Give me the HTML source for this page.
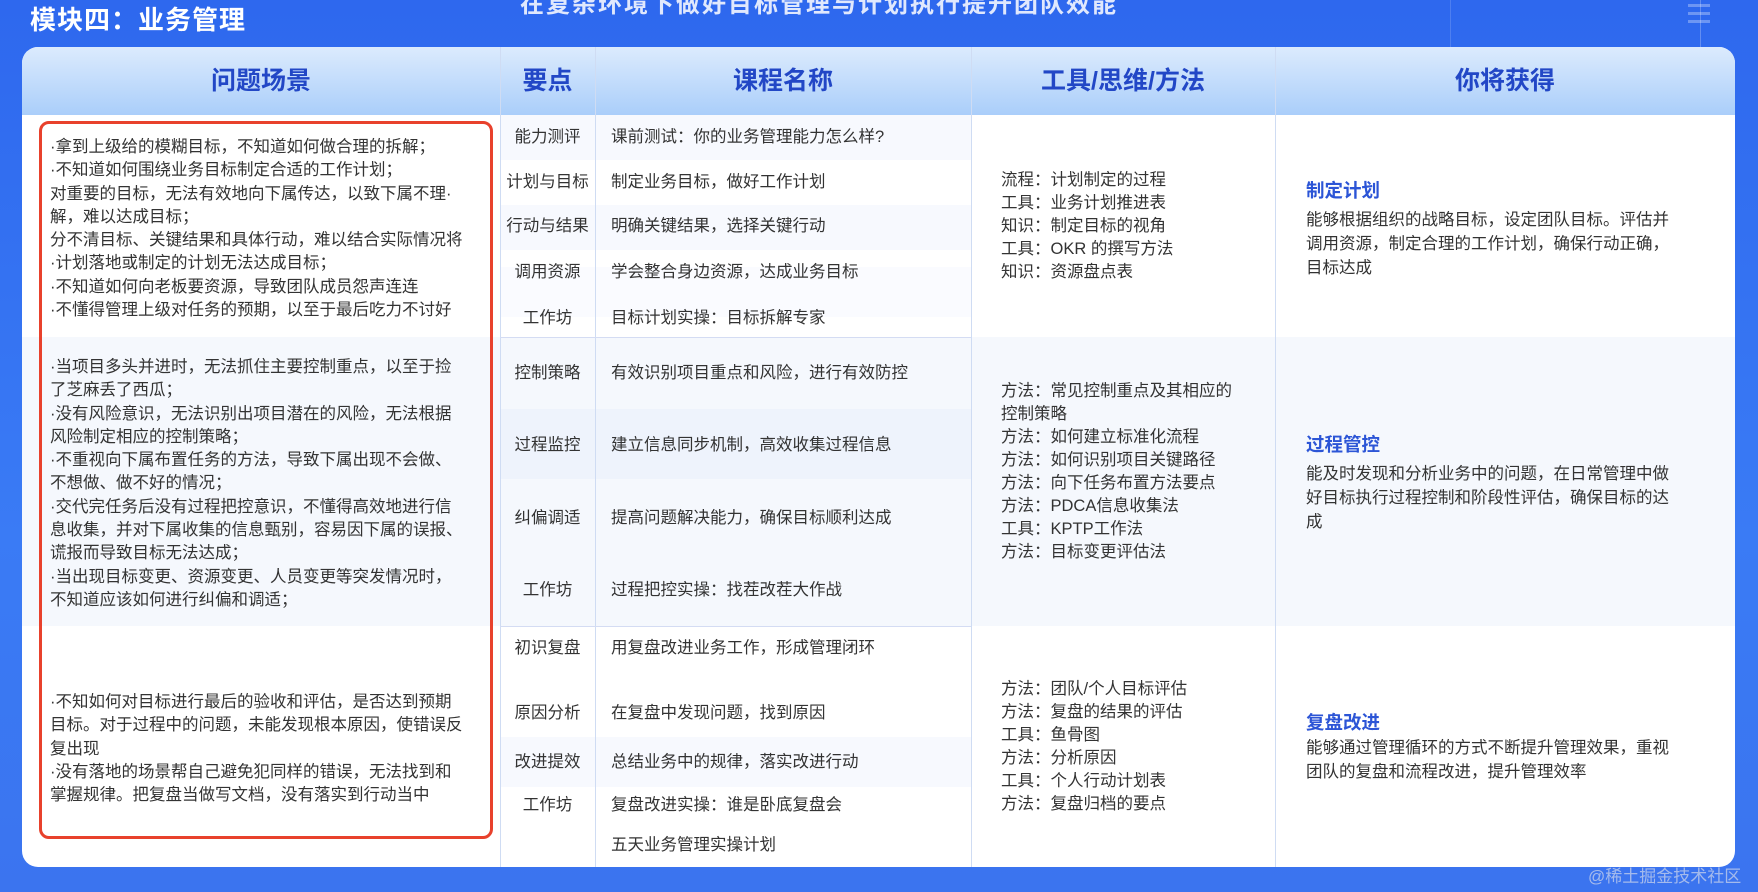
<!DOCTYPE html>
<html><head><meta charset="utf-8"><style>
*{margin:0;padding:0;box-sizing:border-box}
body{width:1758px;height:892px;overflow:hidden;position:relative;background:linear-gradient(180deg,#2e68ee 0%,#3a7bf5 60%,#3b74ef 100%);font-family:"Liberation Sans","Noto Sans CJK SC",sans-serif;color:#333}
.a{position:absolute}
.title{left:30px;top:0px;color:#fff;font-size:26px;font-weight:bold;letter-spacing:1px}
.tbl{left:22px;top:47px;width:1713px;height:820px;background:#fff;border-radius:16px;overflow:hidden}
.hdr{left:0;top:0;width:1713px;height:68px;background:linear-gradient(180deg,#dcebfd,#aacefa)}
.h{top:0;height:68px;line-height:68px;text-align:center;color:#2247c6;font-size:25px;font-weight:bold}
.vl{top:0;width:1px;height:820px;background:#cfdcf3}
.hl{height:1px;background:#d4dcf3}
.t{font-size:16.5px;line-height:22px;white-space:nowrap;color:#333}
.g{font-size:16.5px;line-height:24px;color:#333}
.gt{font-size:18.5px;color:#2c55d6;line-height:24px;font-weight:bold}
.red{left:39px;top:121px;width:454px;height:718px;border:3.5px solid #e8412c;border-radius:10px}
</style></head><body>
<div class="a" style="left:520px;top:-16px;color:rgba(255,255,255,.85);font-size:24px;font-weight:bold;letter-spacing:2px;white-space:nowrap">在复杂环境下做好目标管理与计划执行提升团队效能</div>
<div class="a" style="left:1450px;top:0;width:1px;height:47px;background:rgba(255,255,255,.15)"></div>
<div class="a" style="left:1700px;top:0;width:1px;height:47px;background:rgba(255,255,255,.25)"></div>
<div class="a" style="left:1688px;top:4px;width:22px;height:3px;background:rgba(255,255,255,.3);box-shadow:0 8px 0 rgba(255,255,255,.3),0 16px 0 rgba(255,255,255,.3)"></div>
<div class="a title">模块四：业务管理</div>
<div class="a tbl">
 <div class="a hdr"></div>
 <div class="a" style="left:0;top:290px;width:1713px;height:289px;background:#f5f8fd"></div>
 <div class="a" style="left:478px;top:68px;width:471px;height:45px;background:#f7f9fe"></div>
 <div class="a" style="left:478px;top:158px;width:471px;height:45px;background:#f7f9fe"></div>
 <div class="a" style="left:478px;top:362px;width:471px;height:70px;background:#eef3fc"></div>
 <div class="a" style="left:478px;top:220px;width:471px;height:50px;background:#fafbff"></div>
 <div class="a" style="left:478px;top:690px;width:471px;height:50px;background:#f7f9fe"></div>
 <div class="a h" style="left:0;width:478px">问题场景</div>
 <div class="a h" style="left:478px;width:95px">要点</div>
 <div class="a h" style="left:573px;width:376px">课程名称</div>
 <div class="a h" style="left:949px;width:304px">工具/思维/方法</div>
 <div class="a h" style="left:1253px;width:460px">你将获得</div>
 <div class="a vl" style="left:478px"></div>
 <div class="a vl" style="left:573px"></div>
 <div class="a vl" style="left:949px"></div>
 <div class="a vl" style="left:1253px"></div>
 <div class="a hl" style="left:478px;top:290px;width:471px"></div>
 <div class="a hl" style="left:478px;top:579px;width:471px"></div>
</div>
<div class="a red"></div>
<!-- left -->
<div class="a t" style="left:50px;top:136px;line-height:23.3px">·拿到上级给的模糊目标，不知道如何做合理的拆解；<br>·不知道如何围绕业务目标制定合适的工作计划；<br>对重要的目标，无法有效地向下属传达，以致下属不理·<br>解，难以达成目标；<br>分不清目标、关键结果和具体行动，难以结合实际情况将<br>·计划落地或制定的计划无法达成目标；<br>·不知道如何向老板要资源，导致团队成员怨声连连<br>·不懂得管理上级对任务的预期，以至于最后吃力不讨好</div>
<div class="a t" style="left:50px;top:356px;line-height:23.3px">·当项目多头并进时，无法抓住主要控制重点，以至于捡<br>了芝麻丢了西瓜；<br>·没有风险意识，无法识别出项目潜在的风险，无法根据<br>风险制定相应的控制策略；<br>·不重视向下属布置任务的方法，导致下属出现不会做、<br>不想做、做不好的情况；<br>·交代完任务后没有过程把控意识，不懂得高效地进行信<br>息收集，并对下属收集的信息甄别，容易因下属的误报、<br>谎报而导致目标无法达成；<br>·当出现目标变更、资源变更、人员变更等突发情况时，<br>不知道应该如何进行纠偏和调适；</div>
<div class="a t" style="left:50px;top:691px;line-height:23.3px">·不知如何对目标进行最后的验收和评估，是否达到预期<br>目标。对于过程中的问题，未能发现根本原因，使错误反<br>复出现<br>·没有落地的场景帮自己避免犯同样的错误，无法找到和<br>掌握规律。把复盘当做写文档，没有落实到行动当中</div>
<!-- 要点 / 课程 -->
<div class="a t" style="left:500px;width:95px;text-align:center;top:126px">能力测评</div>
<div class="a t" style="left:500px;width:95px;text-align:center;top:171px">计划与目标</div>
<div class="a t" style="left:500px;width:95px;text-align:center;top:215px">行动与结果</div>
<div class="a t" style="left:500px;width:95px;text-align:center;top:261px">调用资源</div>
<div class="a t" style="left:500px;width:95px;text-align:center;top:307px">工作坊</div>
<div class="a t" style="left:500px;width:95px;text-align:center;top:362px">控制策略</div>
<div class="a t" style="left:500px;width:95px;text-align:center;top:434px">过程监控</div>
<div class="a t" style="left:500px;width:95px;text-align:center;top:507px">纠偏调适</div>
<div class="a t" style="left:500px;width:95px;text-align:center;top:579px">工作坊</div>
<div class="a t" style="left:500px;width:95px;text-align:center;top:637px">初识复盘</div>
<div class="a t" style="left:500px;width:95px;text-align:center;top:702px">原因分析</div>
<div class="a t" style="left:500px;width:95px;text-align:center;top:751px">改进提效</div>
<div class="a t" style="left:500px;width:95px;text-align:center;top:794px">工作坊</div>
<div class="a t" style="left:611px;top:126px">课前测试：你的业务管理能力怎么样?</div>
<div class="a t" style="left:611px;top:171px">制定业务目标，做好工作计划</div>
<div class="a t" style="left:611px;top:215px">明确关键结果，选择关键行动</div>
<div class="a t" style="left:611px;top:261px">学会整合身边资源，达成业务目标</div>
<div class="a t" style="left:611px;top:307px">目标计划实操：目标拆解专家</div>
<div class="a t" style="left:611px;top:362px">有效识别项目重点和风险，进行有效防控</div>
<div class="a t" style="left:611px;top:434px">建立信息同步机制，高效收集过程信息</div>
<div class="a t" style="left:611px;top:507px">提高问题解决能力，确保目标顺利达成</div>
<div class="a t" style="left:611px;top:579px">过程把控实操：找茬改茬大作战</div>
<div class="a t" style="left:611px;top:637px">用复盘改进业务工作，形成管理闭环</div>
<div class="a t" style="left:611px;top:702px">在复盘中发现问题，找到原因</div>
<div class="a t" style="left:611px;top:751px">总结业务中的规律，落实改进行动</div>
<div class="a t" style="left:611px;top:794px">复盘改进实操：谁是卧底复盘会</div>
<div class="a t" style="left:611px;top:834px">五天业务管理实操计划</div>
<!-- tools -->
<div class="a t" style="left:1001px;top:169px;line-height:23px">流程：计划制定的过程<br>工具：业务计划推进表<br>知识：制定目标的视角<br>工具：OKR 的撰写方法<br>知识：资源盘点表</div>
<div class="a t" style="left:1001px;top:380px;line-height:23px">方法：常见控制重点及其相应的<br>控制策略<br>方法：如何建立标准化流程<br>方法：如何识别项目关键路径<br>方法：向下任务布置方法要点<br>方法：PDCA信息收集法<br>工具：KPTP工作法<br>方法：目标变更评估法</div>
<div class="a t" style="left:1001px;top:678px;line-height:23px">方法：团队/个人目标评估<br>方法：复盘的结果的评估<br>工具：鱼骨图<br>方法：分析原因<br>工具：个人行动计划表<br>方法：复盘归档的要点</div>
<!-- gains -->
<div class="a gt" style="left:1306px;top:179px">制定计划</div>
<div class="a g" style="left:1306px;top:208px;width:372px">能够根据组织的战略目标，设定团队目标。评估并调用资源，制定合理的工作计划，确保行动正确，目标达成</div>
<div class="a gt" style="left:1306px;top:433px">过程管控</div>
<div class="a g" style="left:1306px;top:462px;width:372px">能及时发现和分析业务中的问题，在日常管理中做好目标执行过程控制和阶段性评估，确保目标的达成</div>
<div class="a gt" style="left:1306px;top:711px">复盘改进</div>
<div class="a g" style="left:1306px;top:736px;width:372px">能够通过管理循环的方式不断提升管理效果，重视团队的复盘和流程改进，提升管理效率</div>
<div class="a" style="left:1588px;top:862px;font-size:17px;color:rgba(200,210,235,.75)">@稀土掘金技术社区</div>
</body></html>
